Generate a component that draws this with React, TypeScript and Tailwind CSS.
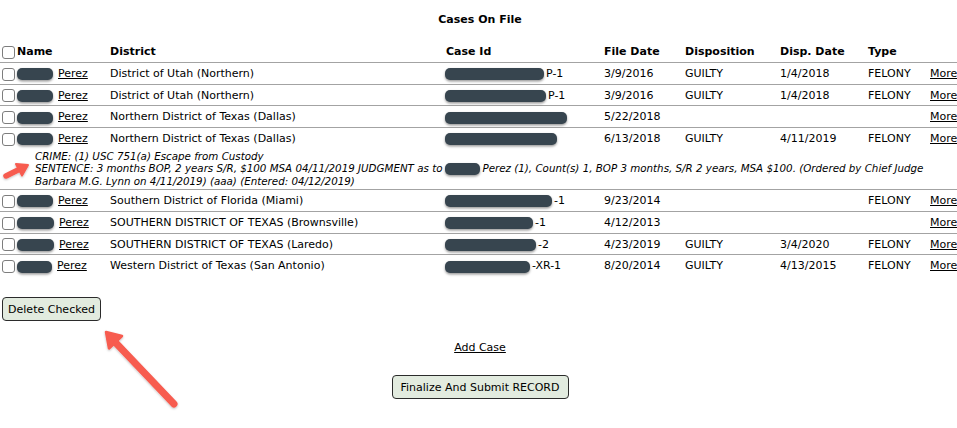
import React from "react";

type CaseRow = {
  nameBlob: number;
  district: string;
  idBlob: number;
  idSuffix: string;
  fileDate: string;
  disposition: string;
  dispDate: string;
  type: string;
  details?: boolean;
};

const rows: CaseRow[] = [
  { nameBlob: 36, district: "District of Utah (Northern)", idBlob: 99, idSuffix: "P-1", fileDate: "3/9/2016", disposition: "GUILTY", dispDate: "1/4/2018", type: "FELONY" },
  { nameBlob: 36, district: "District of Utah (Northern)", idBlob: 101, idSuffix: "P-1", fileDate: "3/9/2016", disposition: "GUILTY", dispDate: "1/4/2018", type: "FELONY" },
  { nameBlob: 36, district: "Northern District of Texas (Dallas)", idBlob: 122, idSuffix: "", fileDate: "5/22/2018", disposition: "", dispDate: "", type: "" },
  { nameBlob: 36, district: "Northern District of Texas (Dallas)", idBlob: 112, idSuffix: "", fileDate: "6/13/2018", disposition: "GUILTY", dispDate: "4/11/2019", type: "FELONY", details: true },
  { nameBlob: 36, district: "Southern District of Florida (Miami)", idBlob: 107, idSuffix: "-1", fileDate: "9/23/2014", disposition: "", dispDate: "", type: "FELONY" },
  { nameBlob: 37, district: "SOUTHERN DISTRICT OF TEXAS (Brownsville)", idBlob: 88, idSuffix: "-1", fileDate: "4/12/2013", disposition: "", dispDate: "", type: "" },
  { nameBlob: 37, district: "SOUTHERN DISTRICT OF TEXAS (Laredo)", idBlob: 91, idSuffix: "-2", fileDate: "4/23/2019", disposition: "GUILTY", dispDate: "3/4/2020", type: "FELONY" },
  { nameBlob: 35, district: "Western District of Texas (San Antonio)", idBlob: 85, idSuffix: "-XR-1", fileDate: "8/20/2014", disposition: "GUILTY", dispDate: "4/13/2015", type: "FELONY" },
];

const cols = "grid grid-cols-[110px_336px_158px_81px_95px_88px_62px_60px] items-center";

function Box() {
  return <span className="inline-block w-[13px] h-[13px] shrink-0 rounded-[3px] border border-[#7d7d7d] bg-white ml-[2px]" />;
}

function Blob({ w }: { w: number }) {
  return (
    <span
      className="inline-block h-[12px] rounded-[5px] bg-[#37454f] shadow-[0_1.5px_2.5px_rgba(0,0,0,0.4)] align-middle"
      style={{ width: w }}
    />
  );
}

export default function App() {
  return (
    <div className="relative w-[957px] h-[428px] overflow-hidden bg-white text-black text-[11px] font-['DejaVu_Sans','Verdana',sans-serif]">
      <div className="w-[960px]">
        <div className="mt-[13px] mb-[13px] text-center font-bold leading-[14px]">Cases On File</div>

        <div className="w-[990px]">
          <div className={`${cols} h-[21.75px] pt-[3px] font-bold`}>
            <div className="flex items-center gap-[2px]">
              <Box />
              <span>Name</span>
            </div>
            <div>District</div>
            <div>Case Id</div>
            <div>File Date</div>
            <div>Disposition</div>
            <div>Disp. Date</div>
            <div>Type</div>
            <div />
          </div>

          {rows.map((r, i) => (
            <div key={i} className="border-t border-[#a3a3a3]">
              <div className={`${cols} h-[20.75px] pt-[2px]`}>
                <div className="flex items-center gap-[2px]">
                  <Box />
                  <a className="underline whitespace-nowrap flex items-center">
                    <Blob w={r.nameBlob} />
                    <span className="ml-[5px]">Perez</span>
                  </a>
                </div>
                <div className="whitespace-nowrap">{r.district}</div>
                <div className="flex items-center whitespace-nowrap -ml-[1px]">
                  <Blob w={r.idBlob} />
                  {r.idSuffix && <span className="ml-[2px]">{r.idSuffix}</span>}
                </div>
                <div>{r.fileDate}</div>
                <div>{r.disposition}</div>
                <div>{r.dispDate}</div>
                <div>{r.type}</div>
                <div>
                  <a className="underline">More</a>
                </div>
              </div>
              {r.details && (
                <div className="h-[40.3px] pl-[35px] pt-[1px] italic text-[10.3px] leading-[12.5px] whitespace-nowrap">
                  <div>CRIME: (1) USC 751(a) Escape from Custody</div>
                  <div className="flex items-center">
                    <span>SENTENCE: 3 months BOP, 2 years S/R, $100 MSA 04/11/2019 JUDGMENT as to</span>
                    <span className="ml-[3px] mr-[2px] flex items-center">
                      <Blob w={35} />
                    </span>
                    <span>Perez (1), Count(s) 1, BOP 3 months, S/R 2 years, MSA $100. (Ordered by Chief Judge</span>
                  </div>
                  <div>Barbara M.G. Lynn on 4/11/2019) (aaa) (Entered: 04/12/2019)</div>
                </div>
              )}
            </div>
          ))}
        </div>

        <div className="mt-[21px] ml-[2px]">
          <button className="h-[24px] w-[99px] rounded-[4px] border border-[#2b2b2b] bg-[#e2ebdf] text-[11px] leading-none">
            Delete Checked
          </button>
        </div>

        <div className="mt-[20px] text-center leading-[14px]">
          <a className="underline">Add Case</a>
        </div>

        <div className="mt-[20px] flex justify-center">
          <button className="h-[24px] w-[177px] rounded-[4px] border border-[#2b2b2b] bg-[#e2ebdf] text-[11px] leading-none">
            Finalize And Submit RECORD
          </button>
        </div>
      </div>

      {/* callout arrows drawn over the page */}
      <svg className="absolute inset-0 pointer-events-none" width="957" height="428" viewBox="0 0 957 428">
        <defs>
          <filter id="arrowShadow" x="-20%" y="-20%" width="140%" height="140%">
            <feDropShadow dx="0" dy="1" stdDeviation="1.2" floodColor="#000" floodOpacity="0.25" />
          </filter>
        </defs>
        <g filter="url(#arrowShadow)" fill="#f75b50" stroke="#f75b50" strokeLinejoin="round" strokeLinecap="round">
          <line x1="6" y1="176" x2="19" y2="169.5" strokeWidth="5.5" />
          <polygon points="28,165 16,164 22,175.5" strokeWidth="2" />
          <line x1="174" y1="404" x2="115" y2="342" strokeWidth="7" />
          <polygon points="106,332 122,336 109,348.5" strokeWidth="2.5" />
        </g>
      </svg>
    </div>
  );
}
